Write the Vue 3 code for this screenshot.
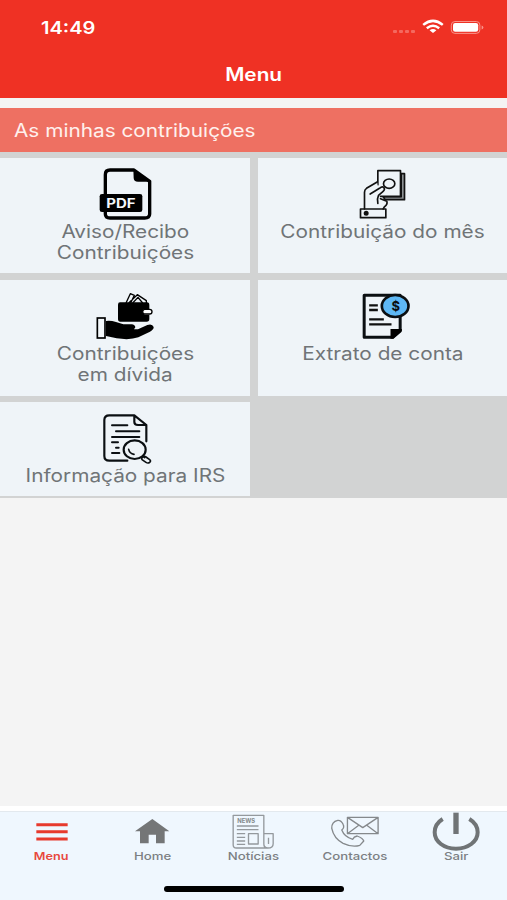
<script setup>
import { ref } from 'vue';

const active = ref('menu');

const cards = [
  { id: 'aviso', lines: ['Aviso/Recibo', 'Contribuições'], viewBox: '285 24 180 186' },
  { id: 'mes', lines: ['Contribuição do mês'], viewBox: '307.5 24 180 186' },
  { id: 'divida', lines: ['Contribuições', 'em dívida'], viewBox: '285 15 180 186' },
  { id: 'extrato', lines: ['Extrato de conta'], viewBox: '309.5 15 180 186' },
  { id: 'irs', lines: ['Informação para IRS'], viewBox: '285 22 180 186' },
];

const tabs = [
  { id: 'menu', label: 'Menu', viewBox: '62 51 180 111' },
  { id: 'home', label: 'Home', viewBox: '366 51 180 111' },
  { id: 'noticias', label: 'Notícias', viewBox: '55.5 51 180 111' },
  { id: 'contactos', label: 'Contactos', viewBox: '359.7 51 180 111' },
  { id: 'sair', label: 'Sair', viewBox: '139 51 180 111' },
];
</script>

<template>
  <div class="screen">
    <header class="header">
      <div class="status">
        <span class="time"><span class="wide">14:49</span></span>
        <svg class="status-icons" viewBox="0 0 96 18">
          <g fill="#f4695f">
            <rect x="2" y="11" width="4" height="3" rx="1" />
            <rect x="8" y="11" width="4" height="3" rx="1" />
            <rect x="14" y="11" width="4" height="3" rx="1" />
            <rect x="20" y="11" width="4" height="3" rx="1" />
          </g>
          <g fill="none" stroke="#fff" stroke-width="2.5">
            <path d="M32.2 5.9Q42 -2.1 51.8 5.9" />
            <path d="M35.8 9.2Q42 4.3 48.2 9.2" />
          </g>
          <path d="M38.6 11.2Q42 9 45.4 11.2L42 14.1Z" fill="#fff" />
          <rect x="60.3" y="2.5" width="28.6" height="11.9" rx="3.6" fill="none" stroke="#f8938a" />
          <rect x="62" y="4.1" width="25.2" height="8.7" rx="2.2" fill="#fff" />
          <path d="M90.6 6.4v4q1.8-.6 1.8-2t-1.8-2" fill="#f8938a" />
        </svg>
      </div>
      <h1 class="title"><span class="wide">Menu</span></h1>
    </header>

    <h2 class="section"><span class="wide">As minhas contribuições</span></h2>

    <main class="grid">
      <div v-for="card in cards" :key="card.id" class="card">
        <svg class="card-icon" :viewBox="card.viewBox">
          <g v-if="card.id === 'aviso'">
            <path d="M402 60H330Q316 60 316 74V192Q316 204 330 204H434Q449 204 449 192V94Z" fill="none" stroke="#000" stroke-width="10" stroke-linejoin="round" />
            <path d="M400 57L452 95H414Q401 95 401 84Z" />
            <rect x="299" y="132" width="128" height="54" rx="7" />
            <text x="319" y="174" textLength="88" lengthAdjust="spacingAndGlyphs" class="pdf">PDF</text>
          </g>
          <g v-else-if="card.id === 'mes'" fill="none" stroke="#111" stroke-width="5" stroke-linejoin="round" stroke-linecap="round">
            <path d="M452 71H462V149H404L398 140H452Z" fill="#8d9194" />
            <path d="M382 62H450V139H382Z" fill="#eff4f8" stroke="none" />
            <path d="M382 104V62H450V139H390" />
            <ellipse cx="416" cy="101" rx="17" ry="14" />
            <path d="M380 96L348 115Q342 119 342 127V177H398L402 170Q412 164 409 154L386 144L384 136L397 125Q404 119 401 114Q397 107 387 115L382 112Z" fill="#eff4f8" stroke="none" />
            <path d="M380 96L348 115Q342 119 342 127V177M359 132L387 115Q397 107 401 114Q404 119 397 125L384 136Q379 146 382 160M390 146L409 154Q412 164 402 170L398 177" />
            <rect x="330" y="177" width="76" height="26" />
            <circle cx="347" cy="190" r="5" fill="#111" />
          </g>
          <g v-else-if="card.id === 'divida'">
            <path d="M378 84L391 56L403 61L392 84M386 84L412 59L439 77V84M398 84L414 67L428 84" fill="none" stroke="#000" stroke-width="4" stroke-linejoin="round" />
            <path d="M360 82H441Q448 82 448 90V102H434Q426 110 434 119H448V132Q448 140 440 140H361Q354 140 354 132V89Q354 82 360 82Z" />
            <path d="M433 103H449Q456 103 456 110T449 117H433Q428 115 428 110T433 103Z" fill="#fff" stroke="#000" stroke-width="4" />
            <rect x="292" y="129" width="23" height="60" fill="#f4f8fb" stroke="#000" stroke-width="5" />
            <path d="M318 138Q332 136 348 141L370 148H395Q405 149 406 157L402 163H414L442 150Q457 145 461 156Q462 163 450 170L415 187Q390 196 350 190L318 183Z" />
          </g>
          <g v-else-if="card.id === 'extrato'">
            <path d="M343 61H451V168L429 187H343Z" fill="none" stroke="#0b0f12" stroke-width="9" stroke-linejoin="round" />
            <path d="M422 162H456V168L430 191H422Z" />
            <path d="M358 91H384M358 105H384M358 133H402M358 148H425" stroke="#111" stroke-width="7" />
            <ellipse cx="436" cy="93" rx="40" ry="33" fill="#5eb8f5" stroke="#0b0f12" stroke-width="8" />
            <text x="438" y="107" text-anchor="middle" class="dollar">$</text>
          </g>
          <g v-else fill="none" stroke="#0b0f12" stroke-width="6.5" stroke-linecap="round" stroke-linejoin="round">
            <path d="M382 198H328Q313 198 313 184V76Q313 62 328 62H403L439 91V140M403 62V82Q403 91 414 91H439" />
            <path d="M336 92H382M348 110H418M336 127H418M336 143H354M348 159H356M336 175H358" stroke-width="6" />
            <ellipse cx="404" cy="165" rx="33" ry="28" />
            <path d="M386 164Q389 177 402 179M428 184L434 189" stroke-width="5" />
            <path d="M425 191Q431 182 438 187L449 195Q454 199 449 203T438 203L426 195Z" stroke-width="5" />
          </g>
        </svg>
        <span v-for="line in card.lines" :key="line" class="card-line"><span class="wide">{{ line }}</span></span>
      </div>
    </main>

    <nav class="tabs">
      <a
        v-for="tab in tabs"
        :key="tab.id"
        class="tab"
        :class="{ active: tab.id === active }"
        @click="active = tab.id"
      >
        <svg class="tab-icon" :viewBox="tab.viewBox">
          <path v-if="tab.id === 'menu'" d="M108 89H202M108 110H202M108 132H202" stroke="#e73a2d" stroke-width="9" />
          <path v-else-if="tab.id === 'home'" d="M457 72L508 109H494V145H468V119H446V145H420V109H405Z" fill="#747677" />
          <g v-else-if="tab.id === 'noticias'" fill="none" stroke="#94999d" stroke-width="4" stroke-linejoin="round">
            <path d="M86 61H178V147Q178 159 188 159H96Q86 159 86 150ZM178 116H206V146Q206 159 190 159Q178 158 178 147M192 128V147" />
            <path d="M97 93H162M97 104H162M97 116H122M97 127H122M97 138H122M97 148H122" stroke-width="4" />
            <rect x="132" y="116" width="29" height="31" />
            <text x="98" y="83" textLength="54" lengthAdjust="spacingAndGlyphs" class="news">NEWS</text>
          </g>
          <g v-else-if="tab.id === 'contactos'" fill="none" stroke="#85898c" stroke-width="4" stroke-linejoin="round">
            <path d="M398 76Q379 80 380 100Q386 130 414 145Q442 158 464 151L476 138Q474 130 456 123Q446 125 443 133Q418 126 410 105Q419 98 414 88Q408 75 398 76Z" />
            <path d="M427 67H519V116H427ZM427 67L473 98L519 67M427 116L461 91M519 116L485 91" />
          </g>
          <g v-else fill="none" stroke="#707476" stroke-width="12">
            <path d="M189 72Q165 87 165 112C165 140 193 161 229 161S294 140 294 112Q294 87 269 72" />
            <path d="M229 53V117" stroke-width="16" />
          </g>
        </svg>
        <span class="tab-label"><span class="wide">{{ tab.label }}</span></span>
      </a>
      <div class="home-indicator"></div>
    </nav>
  </div>
</template>

<style>
body {
  margin: 0;
}
</style>

<style scoped>
.screen {
  display: flex;
  flex-direction: column;
  width: 507px;
  height: 900px;
  overflow: hidden;
  background-color: #f4f4f4;
  font-family: Inter, "Liberation Sans", sans-serif;
}

.wide {
  display: inline-block;
  white-space: nowrap;
  transform: scaleX(1.155);
}

.header {
  height: 97.5px;
  background-color: #ef3124;
  color: #fff;
}

.status {
  display: flex;
  justify-content: space-between;
  padding: 19px 20px 0 41px;
  height: 35px;
}

.time {
  margin-top: 1px;
  font-size: 17px;
  font-weight: 600;
  line-height: 17px;
}

.time .wide {
  transform: scaleX(1.18);
}

.time .wide,
.section .wide {
  transform-origin: left;
}

.status-icons {
  width: 96px;
  height: 18px;
}

.title {
  margin: 9px 0 0;
  text-align: center;
  font-size: 18px;
  font-weight: 600;
  line-height: 24px;
}

.section {
  margin: 10.5px 0 0;
  padding-left: 14px;
  height: 43.7px;
  background-color: #ee7062;
  color: #fff0ed;
  font-size: 18px;
  font-weight: 400;
  line-height: 45px;
}

.grid {
  display: grid;
  grid-template-columns: 250px 249px;
  grid-template-rows: 115.6px 115.6px 93.6px;
  gap: 6.7px 8px;
  padding: 6px 0 2.3px;
  background-color: #d2d3d3;
}

.card {
  display: flex;
  flex-direction: column;
  align-items: center;
  background-color: #eff4f8;
}

.card-icon {
  margin-bottom: 1px;
  width: 60px;
  height: 62px;
}

.card-line {
  color: #707477;
  font-size: 18px;
  line-height: 21.2px;
}

.pdf {
  fill: #f4f8fb;
  font-size: 38px;
  font-weight: 700;
}

.dollar {
  fill: #0b0f12;
  font-size: 39px;
  font-weight: 700;
}

.news {
  fill: #85898c;
  stroke: none;
  font-size: 18px;
  font-weight: 700;
}

.tabs {
  display: grid;
  grid-template-columns: repeat(5, 1fr);
  align-content: start;
  margin-top: auto;
  height: 88px;
  border-top: 1px solid #e3e9ee;
  box-shadow: 0 -5px 0 #fff;
  background-color: #eff7fe;
}

.tab {
  display: flex;
  flex-direction: column;
  align-items: center;
  color: #7c8083;
  cursor: pointer;
}

.tab.active {
  color: #e8483d;
}

.tab-icon {
  width: 60px;
  height: 37px;
  overflow: visible;
}

.tab-label {
  font-size: 11px;
  font-weight: 500;
  line-height: 14px;
}

.tab-label .wide {
  transform: scaleX(1.2);
}

.tab.active .tab-label {
  font-weight: 600;
}

.tab.active .wide {
  transform: scaleX(1.15);
}

.home-indicator {
  grid-column: 1 / -1;
  justify-self: center;
  margin-top: 23px;
  width: 180px;
  height: 5.5px;
  border-radius: 3px;
  background-color: #000;
}
</style>
